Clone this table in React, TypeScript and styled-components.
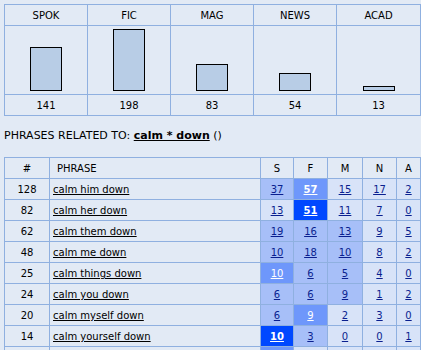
import React from "react";
import styled, { createGlobalStyle } from "styled-components";

const BG = "#e2eaf5";
const LINE = "#8fb0e0";
const HEAT = ["#d8e3f8", "#a7bff8", "#6e97fb", "#0048ff"];

const GlobalStyle = createGlobalStyle`
  html, body { margin: 0; padding: 0; background: ${BG}; }
  body { font-family: "DejaVu Sans", Verdana, sans-serif; color: #000; }
`;

const Page = styled.div`
  padding: 4px 0 0 4px;
  width: 417px;
`;

const ChartGrid = styled.div`
  display: grid;
  grid-template-columns: 82px 82px 82px 82px 83px;
  grid-template-rows: 20px 68px 20px;
  gap: 1px;
  padding: 1px;
  background: ${LINE};
  width: max-content;
`;

const ChartCell = styled.div`
  background: ${BG};
  display: flex;
  align-items: center;
  justify-content: center;
  font-size: 10px;
  padding-top: 1px;
  box-sizing: border-box;
`;

const BarCell = styled.div`
  background: ${BG};
  display: flex;
  align-items: flex-end;
  justify-content: center;
  padding-bottom: 3px;
  box-sizing: border-box;
`;

const Bar = styled.div`
  width: 32px;
  box-sizing: border-box;
  border: 1px solid #000;
  background: #b8cde6;
`;

const Heading = styled.div`
  font-size: 11px;
  line-height: 14px;
  margin: 13px 0 14px;
  white-space: pre;
`;

const KeyLink = styled.a`
  font-weight: bold;
  color: #000;
  text-decoration: underline;
`;

const PhraseGrid = styled.div`
  display: grid;
  grid-template-columns: 44px 210px 32px 33px 34px 33px 23px;
  grid-auto-rows: 20px;
  gap: 1px;
  padding: 1px;
  background: ${LINE};
  width: max-content;
`;

const HeadCell = styled.div<{ $left?: boolean }>`
  background: ${BG};
  display: flex;
  align-items: center;
  justify-content: ${(p) => (p.$left ? "flex-start" : "center")};
  padding-left: ${(p) => (p.$left ? "7px" : "0")};
  padding-top: 1px;
  box-sizing: border-box;
  font-size: 10px;
`;

const NumCell = styled.div`
  background: ${BG};
  display: flex;
  align-items: center;
  justify-content: center;
  padding-top: 1px;
  box-sizing: border-box;
  font-size: 10px;
`;

const PhraseCell = styled.div`
  background: ${BG};
  display: flex;
  align-items: center;
  padding-left: 3px;
  padding-top: 1px;
  box-sizing: border-box;
  font-size: 10px;
`;

const PhraseLink = styled.a`
  color: #000;
  text-decoration: underline;
`;

const HeatCell = styled.div<{ $level: number }>`
  background: ${(p) => HEAT[p.$level]};
  display: flex;
  align-items: center;
  justify-content: center;
  padding-top: 1px;
  box-sizing: border-box;
  font-size: 10px;
`;

const HeatLink = styled.a<{ $light: boolean; $bold?: boolean }>`
  color: ${(p) => (p.$light ? "#ffffff" : "#0a1f8f")};
  font-weight: ${(p) => (p.$bold ? "bold" : "normal")};
  text-decoration: underline;
`;

const genres = [
  { name: "SPOK", value: 141, h: 44 },
  { name: "FIC", value: 198, h: 62 },
  { name: "MAG", value: 83, h: 27 },
  { name: "NEWS", value: 54, h: 18 },
  { name: "ACAD", value: 13, h: 5 },
];

type Cell = [string, number, boolean?];
const rows: { n: string; phrase: string; cells: Cell[] }[] = [
  { n: "128", phrase: "calm him down", cells: [["37", 1], ["57", 2, true], ["15", 0], ["17", 0], ["2", 0]] },
  { n: "82", phrase: "calm her down", cells: [["13", 0], ["51", 3, true], ["11", 0], ["7", 0], ["0", 0]] },
  { n: "62", phrase: "calm them down", cells: [["19", 1], ["16", 1], ["13", 1], ["9", 0], ["5", 0]] },
  { n: "48", phrase: "calm me down", cells: [["10", 1], ["18", 1], ["10", 1], ["8", 0], ["2", 0]] },
  { n: "25", phrase: "calm things down", cells: [["10", 2], ["6", 1], ["5", 1], ["4", 0], ["0", 0]] },
  { n: "24", phrase: "calm you down", cells: [["6", 1], ["6", 1], ["9", 1], ["1", 0], ["2", 0]] },
  { n: "20", phrase: "calm myself down", cells: [["6", 1], ["9", 2], ["2", 0], ["3", 0], ["0", 0]] },
  { n: "14", phrase: "calm yourself down", cells: [["10", 3, true], ["3", 1], ["0", 0], ["0", 0], ["1", 0]] },
];

const trailingLevels = [2, 0, 0, 0, 0];

export default function App() {
  return (
    <>
      <GlobalStyle />
      <Page>
        <ChartGrid>
          {genres.map((g) => (
            <ChartCell key={g.name + "h"}>{g.name}</ChartCell>
          ))}
          {genres.map((g) => (
            <BarCell key={g.name + "b"}>
              <Bar style={{ height: g.h }} />
            </BarCell>
          ))}
          {genres.map((g) => (
            <ChartCell key={g.name + "v"}>{g.value}</ChartCell>
          ))}
        </ChartGrid>
        <Heading>
          {"PHRASES RELATED TO: "}
          <KeyLink href="#">calm * down</KeyLink>
          {" ()"}
        </Heading>
        <PhraseGrid>
          <HeadCell>#</HeadCell>
          <HeadCell $left>PHRASE</HeadCell>
          <HeadCell>S</HeadCell>
          <HeadCell>F</HeadCell>
          <HeadCell>M</HeadCell>
          <HeadCell>N</HeadCell>
          <HeadCell>A</HeadCell>
          {rows.map((r) => (
            <React.Fragment key={r.phrase}>
              <NumCell>{r.n}</NumCell>
              <PhraseCell>
                <PhraseLink href="#">{r.phrase}</PhraseLink>
              </PhraseCell>
              {r.cells.map(([v, lvl, bold], i) => (
                <HeatCell key={i} $level={lvl}>
                  <HeatLink href="#" $light={lvl >= 2} $bold={bold}>
                    {v}
                  </HeatLink>
                </HeatCell>
              ))}
            </React.Fragment>
          ))}
          <NumCell />
          <PhraseCell />
          {trailingLevels.map((lvl, i) => (
            <HeatCell key={"t" + i} $level={lvl} />
          ))}
        </PhraseGrid>
      </Page>
    </>
  );
}
